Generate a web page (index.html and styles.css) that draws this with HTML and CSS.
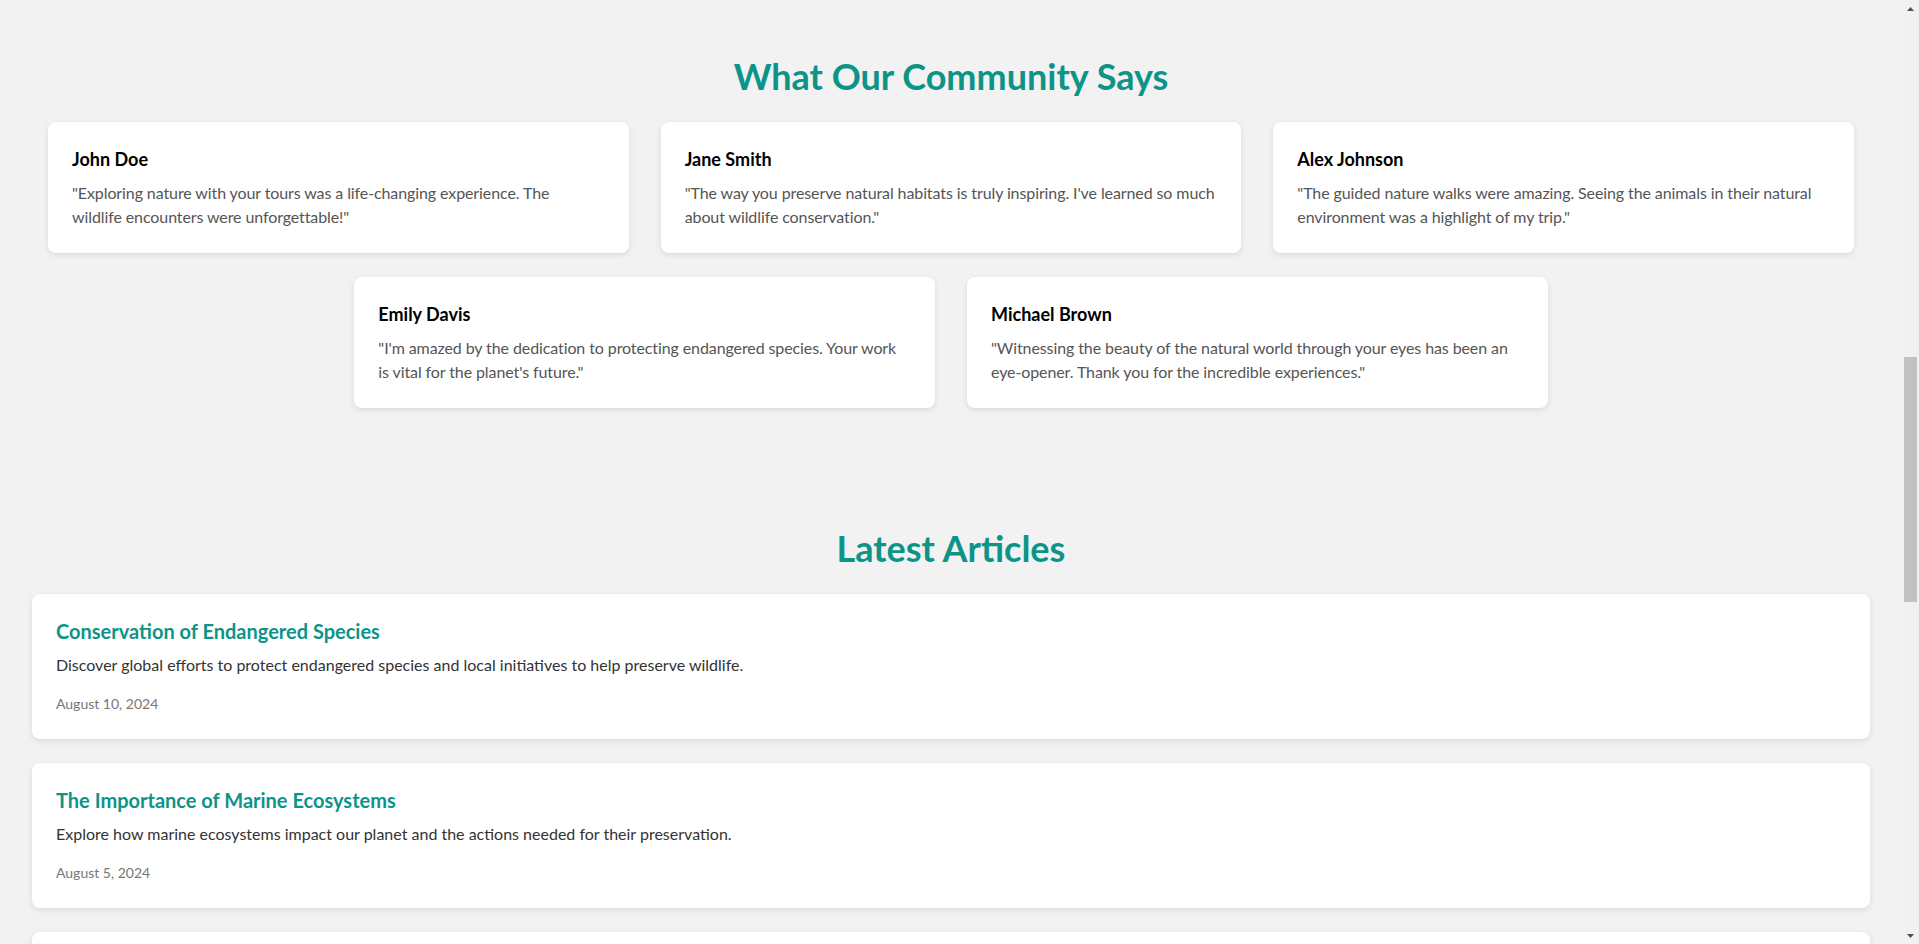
FILE: index.html
```html
<!DOCTYPE html>
<html lang="en">
<head>
<meta charset="utf-8">
<title>Community &amp; Articles</title>
<link rel="stylesheet" href="styles.css">
</head>
<body>
<main class="page">
  <section class="testimonials">
    <h2 class="section-title">What Our Community Says</h2>
    <div class="testimonial-list">
      <div class="testimonial-card">
        <h3 class="person">John Doe</h3>
        <p class="quote">"Exploring nature with your tours was a life-changing experience. The<br>wildlife encounters were unforgettable!"</p>
      </div>
      <div class="testimonial-card">
        <h3 class="person">Jane Smith</h3>
        <p class="quote">"The way you preserve natural habitats is truly inspiring. I've learned so much about wildlife conservation."</p>
      </div>
      <div class="testimonial-card">
        <h3 class="person">Alex Johnson</h3>
        <p class="quote">"The guided nature walks were amazing. Seeing the animals in their natural environment was a highlight of my trip."</p>
      </div>
      <div class="testimonial-card">
        <h3 class="person">Emily Davis</h3>
        <p class="quote">"I'm amazed by the dedication to protecting endangered species. Your work<br>is vital for the planet's future."</p>
      </div>
      <div class="testimonial-card">
        <h3 class="person">Michael Brown</h3>
        <p class="quote">"Witnessing the beauty of the natural world through your eyes has been an eye-opener. Thank you for the incredible experiences."</p>
      </div>
    </div>
  </section>

  <section class="articles">
    <h2 class="section-title">Latest Articles</h2>
    <div class="article-list">
      <article class="article-card">
        <h3 class="article-title">Conservation of Endangered Species</h3>
        <p class="article-desc">Discover global efforts to protect endangered species and local initiatives to help preserve wildlife.</p>
        <p class="article-date">August 10, 2024</p>
      </article>
      <article class="article-card">
        <h3 class="article-title">The Importance of Marine Ecosystems</h3>
        <p class="article-desc">Explore how marine ecosystems impact our planet and the actions needed for their preservation.</p>
        <p class="article-date">August 5, 2024</p>
      </article>
      <article class="article-card article-card-next" aria-hidden="true"></article>
    </div>
  </section>
</main>
<div class="scrollbar" aria-hidden="true">
  <div class="scroll-btn">
    <svg width="7" height="4" viewBox="0 0 7 4"><path d="M0 4 L3.5 0 L7 4 Z" fill="#505050"/></svg>
  </div>
  <div class="scroll-before"></div>
  <div class="scroll-thumb"></div>
  <div class="scroll-after"></div>
  <div class="scroll-btn">
    <svg width="7" height="4" viewBox="0 0 7 4"><path d="M0 0 L7 0 L3.5 4 Z" fill="#505050"/></svg>
  </div>
</div>
</body>
</html>
```

FILE: styles.css
```css
html,
body {
  height: 100%;
}

body {
  margin: 0;
  display: flex;
  overflow: hidden;
  background: #f2f2f2;
  font-family: Lato, "Noto Sans", sans-serif;
  color: #333;
}

.page {
  flex: 1 1 auto;
  min-width: 0;
  overflow: hidden;
}

.testimonials {
  padding: 54px 32px 118px;
}

.articles {
  padding: 0 32px 40px;
}

.section-title {
  margin: 0 0 24px;
  text-align: center;
  font-size: 36px;
  line-height: 44px;
  font-weight: 700;
  color: #0d9488;
}

.testimonial-list {
  display: flex;
  flex-wrap: wrap;
  justify-content: center;
  gap: 24px 32px;
  padding: 0 16px;
}

.testimonial-card {
  box-sizing: border-box;
  flex: 0 0 calc((100% - 64px) / 3);
  background: #fff;
  border-radius: 8px;
  padding: 24px;
  box-shadow: 0 2px 6px rgba(0, 0, 0, 0.1);
}

.person {
  margin: 0 0 9px;
  font-size: 18px;
  line-height: 26px;
  font-weight: 700;
  color: #000;
}

.quote {
  margin: 0;
  font-size: 16px;
  line-height: 24px;
  letter-spacing: -0.1px;
  color: #555;
}

.article-list {
  display: flex;
  flex-direction: column;
  gap: 24px;
}

.article-card {
  background: #fff;
  border-radius: 8px;
  padding: 24px 24px 25px;
  box-shadow: 0 2px 6px rgba(0, 0, 0, 0.1);
}

.article-card-next {
  min-height: 95px;
}

.article-title {
  margin: 0 0 8px;
  font-size: 20px;
  line-height: 27px;
  font-weight: 700;
  color: #0d9488;
}

.article-desc {
  margin: 0 0 16px;
  font-size: 16px;
  line-height: 24px;
  color: #333;
}

.article-date {
  margin: 0;
  font-size: 14px;
  line-height: 21px;
  color: #777;
}

/* scrollbar as drawn in the screenshot */
.scrollbar {
  flex: 0 0 17px;
  display: flex;
  flex-direction: column;
  background: #f1f1f1;
}

.scroll-btn {
  flex: 0 0 17px;
  display: flex;
  align-items: center;
  justify-content: center;
}

.scroll-before {
  flex: 0 0 340px;
}

.scroll-thumb {
  flex: 0 0 245px;
  margin: 0 2px;
  background: #c1c1c1;
}

.scroll-after {
  flex: 1 1 auto;
}
```
